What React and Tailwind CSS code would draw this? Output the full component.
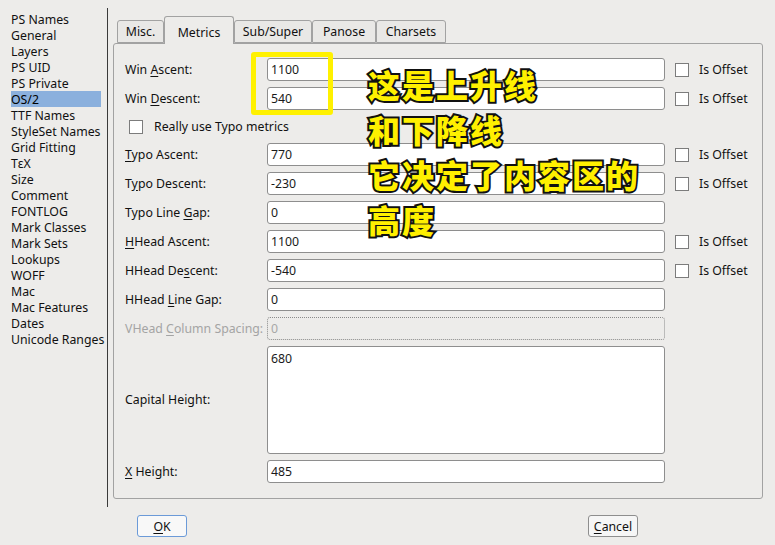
import React from "react";

const sideItems = [
  "PS Names", "General", "Layers", "PS UID", "PS Private", "OS/2", "TTF Names",
  "StyleSet Names", "Grid Fitting", "TεX", "Size", "Comment", "FONTLOG",
  "Mark Classes", "Mark Sets", "Lookups", "WOFF", "Mac", "Mac Features",
  "Dates", "Unicode Ranges",
];

const tabs = [
  { label: "Misc.", w: "w-[47px]" },
  { label: "Metrics", w: "w-[70px]", active: true },
  { label: "Sub/Super", w: "w-[78px]" },
  { label: "Panose", w: "w-[64px]" },
  { label: "Charsets", w: "w-[70px]" },
];

function L({ pre, u, post, disabled }) {
  return (
    <span className={disabled ? "text-[#a4a4a4]" : "text-[#111]"}>
      {pre}
      {u ? <span className="underline underline-offset-2">{u}</span> : null}
      {post}
    </span>
  );
}

function Check() {
  return <span className="block w-[14px] h-[14px] border border-[#7c7c7c] bg-white shrink-0" />;
}

function Row({ label, value, offset }) {
  return (
    <div className="flex items-center h-[23px]">
      <div className="w-[142px] shrink-0 whitespace-nowrap">{label}</div>
      <div className="w-[398px] h-[23px] border border-[#8e8e8e] rounded-[3px] bg-white flex items-center pl-[3px] text-[#1a1a1a]">
        {value}
      </div>
      {offset ? (
        <div className="flex items-center ml-[10px]">
          <Check />
          <span className="ml-[10px] text-[#111]">Is Offset</span>
        </div>
      ) : null}
    </div>
  );
}

export default function App() {
  return (
    <div className="relative w-[775px] h-[545px] bg-[#edecea] font-['Noto_Sans',sans-serif] text-[12.3px] leading-4 overflow-hidden">
      <div className="flex h-[507px]">
        {/* sidebar */}
        <div className="w-[107px] shrink-0 pt-[11px] pl-[11px]">
          {sideItems.map((s) => (
            <div
              key={s}
              className={
                "h-4 w-[90px] whitespace-nowrap pt-px leading-[15px] " +
                (s === "OS/2" ? "bg-[#8bb0dd] text-black" : "text-[#111]")
              }
            >
              {s}
            </div>
          ))}
        </div>
        {/* divider */}
        <div className="mt-[8px] w-px h-[499px] bg-[#3a3a3a] shrink-0" />
        {/* tab widget */}
        <div className="ml-[5px] mt-[16px] w-[650px] flex flex-col">
          <div className="flex items-start pl-[4px] h-[27px] relative z-10">
            {tabs.map((t) =>
              t.active ? (
                <div
                  key={t.label}
                  className={t.w + " h-[28px] border border-b-0 border-[#a2a2a2] rounded-t-[3px] bg-[#edecea] flex items-center justify-center pt-[4px] text-[#111]"}
                >
                  {t.label}
                </div>
              ) : (
                <div
                  key={t.label}
                  className={t.w + " mt-[4px] h-[23px] border border-[#a2a2a2] rounded-t-[3px] bg-[#e9e8e6] flex items-center justify-center pt-[1px] text-[#111]"}
                >
                  {t.label}
                </div>
              )
            )}
          </div>
          <div className="h-[456px] border border-[#a2a2a2] rounded-[3px] pl-[11px] pt-[14px] flex flex-col gap-[6px]">
            <Row label={<L pre="Win " u="A" post="scent:" />} value="1100" offset />
            <Row label={<L pre="Win " u="D" post="escent:" />} value="540" offset />
            <div className="flex items-center h-[21px] pl-[4px]">
              <Check />
              <span className="ml-[11px] text-[#111]">Really use Typo metrics</span>
            </div>
            <Row label={<L u="T" post="ypo Ascent:" />} value="770" offset />
            <Row label={<L pre="T" u="y" post="po Descent:" />} value="-230" offset />
            <Row label={<L pre="Typo Line " u="G" post="ap:" />} value="0" />
            <Row label={<L u="H" post="Head Ascent:" />} value="1100" offset />
            <Row label={<L pre="HHead De" u="s" post="cent:" />} value="-540" offset />
            <Row label={<L pre="HHead " u="L" post="ine Gap:" />} value="0" />
            <div className="flex items-center h-[23px]">
              <div className="w-[142px] shrink-0 whitespace-nowrap">
                <L pre="VHead " u="C" post="olumn Spacing:" disabled />
              </div>
              <div className="w-[398px] h-[23px] border border-dotted border-[#8a8a8a] rounded-[3px] flex items-center pl-[3px] text-[#a8a8a8]">
                0
              </div>
            </div>
            <div className="flex items-center h-[108px]">
              <div className="w-[142px] shrink-0 text-[#111]">Capital Height:</div>
              <div className="w-[398px] h-[108px] border border-[#8e8e8e] rounded-[3px] bg-white pl-[3px] pt-[4px] text-[#1a1a1a]">
                680
              </div>
            </div>
            <Row label={<L u="X" post=" Height:" />} value="485" />
          </div>
        </div>
      </div>
      {/* buttons */}
      <div className="flex mt-[8px] h-[22px]">
        <div className="ml-[137px] w-[50px] h-[22px] border border-[#6b9ad8] rounded-[3px] bg-[#f8f8f8] flex items-center justify-center pt-px text-[#111]">
          <span><span className="underline underline-offset-2">O</span>K</span>
        </div>
        <div className="ml-[401px] w-[50px] h-[22px] border border-[#8e8e8e] rounded-[3px] bg-[#f6f6f6] flex items-center justify-center pt-px text-[#111]">
          <span><span className="underline underline-offset-2">C</span>ancel</span>
        </div>
      </div>

      {/* annotation overlays */}
      <div className="absolute left-[251px] top-[52px] w-[82px] h-[63px] border-[5px] border-[#fff100] rounded-[3px]" />
      <div className="absolute left-[368px] top-[62px] text-[32px] leading-[45px] font-black text-[#fff000] font-['Noto_Sans_CJK_SC',sans-serif] [-webkit-text-stroke:4px_#111] [paint-order:stroke_fill] tracking-[2px]">
        <div>这是上升线</div>
        <div>和下降线</div>
        <div>它决定了内容区的</div>
        <div>高度</div>
      </div>
    </div>
  );
}
